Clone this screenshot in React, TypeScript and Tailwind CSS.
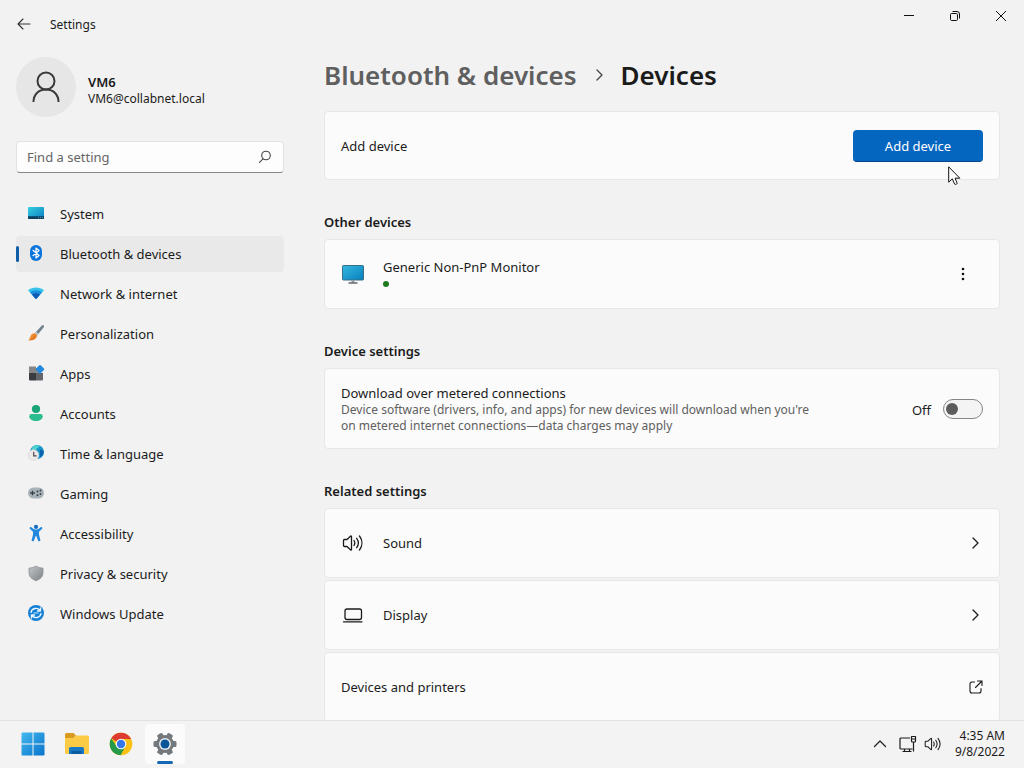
import React from 'react';

type IconProps = { className?: string };

const SystemIcon = () => (
  <svg viewBox="0 0 20 20" className="w-5 h-5">
    <defs>
      <linearGradient id="sys" x1="0" y1="0" x2="1" y2="1">
        <stop offset="0" stopColor="#35d0e0" />
        <stop offset="1" stopColor="#0a7cc0" />
      </linearGradient>
    </defs>
    <rect x="2" y="4" width="16" height="12" rx="1" fill="url(#sys)" />
    <path d="M2 13.3h16V15a1 1 0 0 1-1 1H3a1 1 0 0 1-1-1z" fill="#0b3d5e" />
    <path d="M12 14.7h1M14 14.7h1M16 14.7h1" stroke="#7fb6d6" strokeWidth=".8" />
  </svg>
);

const BluetoothIcon = () => (
  <svg viewBox="0 0 20 20" className="w-5 h-5">
    <rect x="4" y="2" width="12" height="16" rx="6" fill="#0b74dd" />
    <path d="M7 7.3l6 5.2-3 2.5V5l3 2.5-6 5.2" fill="none" stroke="#fff" strokeWidth="1.2" strokeLinejoin="round" strokeLinecap="round" />
  </svg>
);

const NetworkIcon = () => (
  <svg viewBox="0 0 20 20" className="w-5 h-5">
    <path d="M2 7.2C6.5 3.6 13.5 3.6 18 7.2L10.7 15.4a1 1 0 0 1-1.4 0z" fill="#38c4ea" />
    <path d="M3.9 9.3C7.5 6.5 12.5 6.5 16.1 9.3L10.7 15.4a1 1 0 0 1-1.4 0z" fill="#1c8fdc" />
    <path d="M6 11.6C8.500 9.800 11.500 9.800 14 11.6L10.700 15.400a1 1 0 0 1-1.400 0z" fill="#1159b5" />
  </svg>
);

const PersonalizationIcon = () => (
  <svg viewBox="0 0 20 20" className="w-5 h-5">
    <path d="M17.600 2.300c.6.500.5 1.400 0 2.100L11 12.600 8.600 10.400 15.800 2.600c.5-.6 1.200-.8 1.800-.3z" fill="#71828e" />
    <path d="M10.200 8.700l2.500 2.300-1.700 1.900-2.600-2.400z" fill="#bccbd3" />
    <path d="M8.500 10.200c1.500.2 2.700 1.400 2.500 2.900-.4 3.200-4.200 4.900-9 4.100 1.800-.8 1.800-2.300 2.500-4.200.6-1.700 2.200-3 4-2.800z" fill="#ef8d32" />
    <path d="M5 16.500c2.200-.5 3.500-2 4-4" stroke="#c95f1a" fill="none" />
  </svg>
);

const AppsIcon = () => (
  <svg viewBox="0 0 20 20" className="w-5 h-5">
    <path d="M3 3.500h7V10H3z" fill="#868686" />
    <path d="M3 10h7v7.500H4a1 1 0 0 1-1-1z" fill="#393c40" />
    <path d="M10 10h7v6.500a1 1 0 0 1-1 1h-6z" fill="#62666a" />
    <path d="M10 5h3v5h-3z" fill="#8c8f92" />
    <rect x="10.700" y="3" width="6.600" height="6.600" rx="1" transform="rotate(45 14 6.300)" fill="#2389df" />
  </svg>
);

const AccountsIcon = () => (
  <svg viewBox="0 0 20 20" className="w-5 h-5">
    <circle cx="10" cy="6" r="4.100" fill="#1aa579" />
    <path d="M5.500 11h9a2.200 2.200 0 0 1 2.200 2.200c0 3-3 4.800-6.700 4.800s-6.700-1.800-6.700-4.800A2.200 2.200 0 0 1 5.500 11z" fill="#2cbc90" />
  </svg>
);

const TimeIcon = () => (
  <svg viewBox="0 0 20 20" className="w-5 h-5">
    <circle cx="11" cy="9" r="7" fill="#1896c9" />
    <path d="M6.500 3.700c2-1.700 5-2 7-1-.5 2-2.500 2-3 3.500S7.500 8 5.500 7z" fill="#4fd1cc" />
    <path d="M13.500 7c2-.8 3 0 4.300 1.300-.1 2.400-1.300 4.600-3.200 6C13 12 14.500 9 13.500 7z" fill="#0b63ad" />
    <circle cx="7.500" cy="12" r="5.300" fill="#eceaea" stroke="#d9cfd3" strokeWidth=".6" />
    <path d="M7.700 8.800v4h3" fill="none" stroke="#55474f" strokeWidth="1.200" />
  </svg>
);

const GamingIcon = () => (
  <svg viewBox="0 0 20 20" className="w-5 h-5">
    <rect x="2" y="4.500" width="16" height="11" rx="5.500" fill="#a8b3b9" />
    <path d="M4.200 10h4.600M6.500 7.700v4.600" stroke="#35424a" strokeWidth="1.300" />
    <g fill="#35424a">
      <circle cx="11.500" cy="8.500" r="1" />
      <circle cx="14.500" cy="7.500" r="1" />
      <circle cx="14.500" cy="11" r="1" />
      <circle cx="11.500" cy="12.300" r="1" />
    </g>
  </svg>
);

const AccessibilityIcon = () => (
  <svg viewBox="0 0 20 20" className="w-5 h-5">
    <circle cx="10" cy="3.900" r="2.100" fill="#176fc0" />
    <path d="M4 4.300c.6-.6 1.300-.3 1.800.2C8.300 7.200 11.700 7.200 14.200 4.500c.5-.5 1.200-.8 1.800-.2.600.6.400 1.300-.1 1.800L13 8.700v3l1.300 5c.2.800-.1 1.400-.8 1.500-.7.200-1.300-.1-1.500-.8L10.300 13h-.6L8 17.400c-.2.700-.8 1-1.500.8-.7-.1-1-.7-.8-1.500l1.300-5v-3L4.100 6.100C3.600 5.600 3.400 4.900 4 4.300z" fill="#2189dd" />
  </svg>
);

const PrivacyIcon = () => (
  <svg viewBox="0 0 20 20" className="w-5 h-5">
    <defs>
      <linearGradient id="shield" x1="0" y1="0" x2="1" y2="1">
        <stop offset="0" stopColor="#c4c7c9" />
        <stop offset="1" stopColor="#7c8084" />
      </linearGradient>
    </defs>
    <path d="M10 3c2.300 1.400 4.300 2 7 2.100v4.500c0 4-2.500 6.500-7 8.200-4.500-1.700-7-4.200-7-8.200V5.100C5.700 5 7.700 4.400 10 3z" fill="url(#shield)" stroke="#8d9195" strokeWidth=".8" />
  </svg>
);

const UpdateIcon = () => (
  <svg viewBox="0 0 20 20" className="w-5 h-5">
    <circle cx="10" cy="10" r="8" fill="#1580d4" />
    <g fill="none" stroke="#e8f5ff" strokeWidth="1.400" strokeLinecap="round" strokeLinejoin="round">
      <path d="M5 9.300C5.800 5.200 11.500 4 14 7.500M14.500 5v3h-3" />
      <path d="M15 10.700C14.200 14.800 8.500 16 6 12.500M5.500 15v-3h3" />
    </g>
    <path d="M7.500 10h5" stroke="#9fd4fa" strokeWidth="1.200" />
  </svg>
);

const SpeakerIcon = ({ className }: IconProps) => (
  <svg viewBox="0 0 22 20" className={className} fill="none" stroke="currentColor" strokeWidth="1.300" strokeLinecap="round" strokeLinejoin="round">
    <path d="M2.500 7.500a1 1 0 0 1 1-1H6l3.700-3.400c.4-.3.800-.1.800.4v13c0 .5-.4.700-.8.400L6 13.500H3.500a1 1 0 0 1-1-1z" />
    <path d="M13 7.500c1 1.500 1 3.500 0 5M15.700 5.300c2 2.800 2 6.600 0 9.400M18.500 3c3.200 4.200 3.200 9.800 0 14" />
  </svg>
);

const LaptopIcon = () => (
  <svg viewBox="0 0 22 20" className="w-[22px] h-5" fill="none" stroke="currentColor" strokeWidth="1.300" strokeLinecap="round">
    <rect x="4" y="4" width="16.500" height="10.500" rx="2" />
    <path d="M2.500 16.800h18.500" />
  </svg>
);

const ChevronRight = ({ className }: IconProps) => (
  <svg viewBox="0 0 12 12" className={className} fill="none" stroke="currentColor" strokeWidth="1.300" strokeLinecap="round" strokeLinejoin="round">
    <path d="M4 1l5 5-5 5" />
  </svg>
);

const OpenIcon = () => (
  <svg viewBox="0 0 14 14" className="w-3.5 h-3.5" fill="none" stroke="currentColor" strokeWidth="1.100" strokeLinecap="round" strokeLinejoin="round">
    <path d="M5.500 2H3a2 2 0 0 0-2 2v7a2 2 0 0 0 2 2h7a2 2 0 0 0 2-2V8.500M8.500 1H13v4.500M13 1L6.500 7.500" />
  </svg>
);

const MonitorIcon = () => (
  <svg viewBox="0 0 24 20" className="w-6 h-5">
    <defs>
      <linearGradient id="mon" x1="0" y1="0" x2="1" y2="1">
        <stop offset="0" stopColor="#35b9df" />
        <stop offset="1" stopColor="#087fbd" />
      </linearGradient>
    </defs>
    <rect x="1.500" y="1.500" width="21" height="14.500" rx=".8" fill="url(#mon)" stroke="#3a6e87" />
    <path d="M10.500 16.500h3v2h-3z" fill="#8f979b" />
    <path d="M7.500 19h9" stroke="#41474b" strokeWidth="1.200" />
  </svg>
);

const Cursor = () => (
  <svg viewBox="0 0 13 20" className="w-[13px] h-5">
    <path d="M.7.8v15.400l3.600-3.400 2.300 5.300c.9.700 2.300.1 2.600-.8L7 12.200h4.800z" fill="#fff" stroke="#111" />
  </svg>
);

const WindowsLogo = () => (
  <svg viewBox="0 0 24 24" className="w-6 h-6">
    <defs>
      <linearGradient id="win" x1="0" y1="0" x2="1" y2="1">
        <stop offset="0" stopColor="#45b9ef" />
        <stop offset="1" stopColor="#0873cc" />
      </linearGradient>
    </defs>
    <path d="M1.500.5h10v11H.5v-10a1 1 0 0 1 1-1zM12.500.5h10a1 1 0 0 1 1 1v10h-11zM.5 12.500h11v11h-10a1 1 0 0 1-1-1zM12.500 12.500h11v10a1 1 0 0 1-1 1h-10z" fill="url(#win)" />
  </svg>
);

const ExplorerIcon = () => (
  <svg viewBox="0 0 24 24" className="w-6 h-6">
    <path d="M0 2.500a1.500 1.500 0 0 1 1.500-1.500h7L11 3.500 8.500 6H0z" fill="#d99a1e" />
    <path d="M0 6h8.500L11 3.500h11.500A1.500 1.500 0 0 1 24 5v15.500a1.500 1.500 0 0 1-1.500 1.500h-21A1.500 1.500 0 0 1 0 20.500z" fill="#fbcb45" />
    <path d="M4 22v-5.500A1.500 1.500 0 0 1 5.500 15h12a1.500 1.500 0 0 1 1.500 1.500V22z" fill="#1878c4" />
    <path d="M6.500 19h10v3h-10z" fill="#0c5b9f" />
  </svg>
);

const ChromeIcon = () => (
  <svg viewBox="0 0 24 24" className="w-6 h-6">
    <circle cx="12" cy="12" r="11.300" fill="#fbc116" />
    <path d="M12 12L2.200 6.350A11.300 11.300 0 0 1 21.800 6.350L22 6.900H12z" fill="#dd3b2f" />
    <path d="M2.200 6.350A11.300 11.300 0 0 0 11.500 23.300L16.400 14.600 12 12 7.600 14.600z" fill="#249a4a" />
    <circle cx="12" cy="12" r="5.300" fill="#fff" />
    <circle cx="12" cy="12" r="4.200" fill="#3578e5" />
  </svg>
);

const GearIcon = () => (
  <svg viewBox="0 0 24 24" className="w-6 h-6">
    <g fill="#74797e">
      <circle cx="12" cy="12" r="9" />
      <rect x="9" y=".5" width="6" height="23" rx="1.500" transform="rotate(30 12 12)" />
      <rect x="9" y=".5" width="6" height="23" rx="1.500" transform="rotate(90 12 12)" />
      <rect x="9" y=".5" width="6" height="23" rx="1.500" transform="rotate(150 12 12)" />
    </g>
    <circle cx="12" cy="12" r="6" fill="#e9edf0" />
    <circle cx="12" cy="12" r="4.500" fill="#0d5599" />
  </svg>
);

const NetworkTrayIcon = () => (
  <svg viewBox="0 0 18 18" className="w-[18px] h-[18px]" fill="none" stroke="currentColor" strokeWidth="1.200" strokeLinejoin="round">
    <path d="M11 3H2a1 1 0 0 0-1 1v9a1 1 0 0 0 1 1h11.500M5.500 14v2.500M10.500 14v2.500M3.500 16.500h9" />
    <path d="M12.500 1.500h4V6a1 1 0 0 1-1 1h-2a1 1 0 0 1-1-1zM12.500 4h4M14.500 7v9.500" />
  </svg>
);

const navItems = [
  { label: 'System', icon: <SystemIcon /> },
  { label: 'Bluetooth & devices', icon: <BluetoothIcon />, active: true },
  { label: 'Network & internet', icon: <NetworkIcon /> },
  { label: 'Personalization', icon: <PersonalizationIcon /> },
  { label: 'Apps', icon: <AppsIcon /> },
  { label: 'Accounts', icon: <AccountsIcon /> },
  { label: 'Time & language', icon: <TimeIcon /> },
  { label: 'Gaming', icon: <GamingIcon /> },
  { label: 'Accessibility', icon: <AccessibilityIcon /> },
  { label: 'Privacy & security', icon: <PrivacyIcon /> },
  { label: 'Windows Update', icon: <UpdateIcon /> },
];

const taskbarApps = [
  { label: 'Start', icon: <WindowsLogo /> },
  { label: 'File Explorer', icon: <ExplorerIcon /> },
  { label: 'Google Chrome', icon: <ChromeIcon /> },
  { label: 'Settings', icon: <GearIcon />, active: true },
];

const TitleBar = () => (
  <header className="flex justify-between h-12 shrink-0">
    <div className="flex items-center gap-[18px] pl-4">
      <button aria-label="Back" className="w-4 h-4">
        <svg viewBox="0 0 16 16" className="w-4 h-4" fill="none" stroke="#333" strokeWidth="1.100" strokeLinecap="round" strokeLinejoin="round">
          <path d="M14 8H2.500M7 3L2 8l5 5" />
        </svg>
      </button>
      <span className="pt-0.5 text-[12px] leading-4">Settings</span>
    </div>
    <div className="flex h-8">
      <button aria-label="Minimize" className="w-[46px] flex items-center justify-center">
        <svg viewBox="0 0 12 12" className="w-3 h-3" fill="none" stroke="#111">
          <path d="M1 5.500h10" />
        </svg>
      </button>
      <button aria-label="Restore" className="w-[46px] flex items-center justify-center">
        <svg viewBox="0 0 12 12" className="w-3 h-3" fill="none" stroke="#111">
          <rect x="1.500" y="3.500" width="7" height="7" rx="1.200" />
          <path d="M3.500 1.500H8A2.500 2.500 0 0 1 10.500 4v4.500" />
        </svg>
      </button>
      <button aria-label="Close" className="w-[46px] flex items-center justify-center">
        <svg viewBox="0 0 12 12" className="w-3 h-3" fill="none" stroke="#111">
          <path d="M1 1l10 10M11 1L1 11" />
        </svg>
      </button>
    </div>
  </header>
);

const Sidebar = () => (
  <aside className="w-[300px] shrink-0 px-4 pt-[9px]">
    <div className="flex items-center gap-3">
      <div className="w-15 h-15 rounded-full bg-[#e6e6e6] flex items-center justify-center">
        <svg viewBox="0 0 32 32" className="w-8 h-8" fill="none" stroke="#3a3a3a" strokeWidth="2">
          <circle cx="16" cy="10" r="8.500" />
          <path d="M3.500 31C3.500 23.500 8.500 18.500 16 18.500S28.500 23.500 28.500 31" />
        </svg>
      </div>
      <div className="pb-0.5 pt-2">
        <div className="text-[13px] leading-[18px] font-semibold">VM6</div>
        <div className="text-[12px] leading-4">VM6@collabnet.local</div>
      </div>
    </div>

    <label className="mt-6 flex items-center h-8 px-2.5 bg-[#fdfdfd] rounded border border-[#e2e2e2] border-b-[#868686]">
      <input
        type="text"
        aria-label="Find a setting"
        placeholder="Find a setting"
        className="flex-1 min-w-0 h-[22px] bg-transparent text-[13px] leading-[22px] outline-none placeholder:text-[#666]"
      />
      <svg viewBox="0 0 16 16" className="w-4 h-4" fill="none" stroke="#444" strokeWidth="1.100" strokeLinecap="round">
        <circle cx="9" cy="6.500" r="4.300" />
        <path d="M6 9.800L2.500 13.300" />
      </svg>
    </label>

    <nav className="mt-[23px] flex flex-col gap-1">
      {navItems.map((item) => (
        <a
          key={item.label}
          href="#"
          className={`relative flex items-center gap-3.5 h-9 pl-2.5 rounded ${item.active ? 'bg-[#e9e9e9]' : ''}`}
        >
          {item.active && <span className="absolute left-0 top-2.5 w-[3px] h-4 rounded-full bg-[#0f5ea8]" />}
          <span className="pb-0.5">{item.icon}</span>
          <span className="text-[13px] leading-5">{item.label}</span>
        </a>
      ))}
    </nav>
  </aside>
);

const cardClass = 'relative flex items-center bg-[#fbfbfb] border border-[#e7e7e7] rounded px-4';

const SectionTitle = ({ children }: { children: React.ReactNode }) => (
  <h2 className="mt-8 mb-[7px] text-[13px] leading-5 font-semibold">{children}</h2>
);

const Content = () => (
  <main className="flex-1 min-w-0 px-6 pt-[7px]">
    <h1 className="flex items-center text-[26px] leading-10 font-semibold">
      <a href="#" className="text-[#5f5f5f]">Bluetooth &amp; devices</a>
      <ChevronRight className="w-3 h-3 mx-4 text-[#444]" />
      <span>Devices</span>
    </h1>

    <section className={`${cardClass} mt-4 h-[69px] justify-between`}>
      <span className="text-[13px] leading-5">Add device</span>
      <button className="w-[130px] h-8 pt-px rounded bg-[#0566c0] border-b border-[#06458a] text-white text-[13px] leading-5">Add device</button>
      <div className="absolute right-[38px] top-[54px] pointer-events-none">
        <Cursor />
      </div>
    </section>

    <SectionTitle>Other devices</SectionTitle>
    <section className={`${cardClass} h-[70px]`}>
      <MonitorIcon />
      <div className="flex-1 ml-[18px]">
        <div className="text-[13px] leading-5">Generic Non-PnP Monitor</div>
        <div className="mt-1 mb-1 w-1.5 h-1.5 rounded-full bg-[#1f7a1f]" />
      </div>
      <button aria-label="More options" className="w-10 h-8 flex items-center justify-center">
        <svg viewBox="0 0 4 14" className="w-1 h-3.5" fill="#111">
          <circle cx="2" cy="2" r="1.300" />
          <circle cx="2" cy="7" r="1.300" />
          <circle cx="2" cy="12" r="1.300" />
        </svg>
      </button>
    </section>

    <SectionTitle>Device settings</SectionTitle>
    <section className={`${cardClass} h-[81px] justify-between`}>
      <div className="max-w-[476px]">
        <div className="text-[13px] leading-[18px]">Download over metered connections</div>
        <p id="metered-note" className="text-[12px] leading-4 text-[#606060]">
          Device software (drivers, info, and apps) for new devices will download when you're on metered internet
          connections—data charges may apply
        </p>
      </div>
      <label className="flex items-center gap-3 text-[13px] leading-5">
        <span className="pt-0.5">Off</span>
        <input
          type="checkbox"
          role="switch"
          aria-describedby="metered-note"
          className="appearance-none w-10 h-5 rounded-full border border-[#858585] bg-[#f4f4f4] flex items-center px-[2px] before:w-3 before:h-3 before:rounded-full before:bg-[#5c5c5c] checked:justify-end"
        />
      </label>
    </section>

    <SectionTitle>Related settings</SectionTitle>
    <div className="flex flex-col gap-0.5">
      <a href="#" className={`${cardClass} h-[70px]`}>
        <SpeakerIcon className="w-[22px] h-5" />
        <span className="flex-1 ml-5 text-[13px] leading-5">Sound</span>
        <ChevronRight className="w-3 h-3 mr-0.5" />
      </a>
      <a href="#" className={`${cardClass} h-[70px]`}>
        <LaptopIcon />
        <span className="flex-1 ml-5 text-[13px] leading-5">Display</span>
        <ChevronRight className="w-3 h-3 mr-0.5" />
      </a>
      <a href="#" className={`${cardClass} h-[70px] justify-between`}>
        <span className="text-[13px] leading-5">Devices and printers</span>
        <OpenIcon />
      </a>
    </div>
  </main>
);

const Taskbar = () => (
  <footer className="flex items-center justify-between h-12 shrink-0 pl-[13px] pr-[19px] bg-[#f3f3f3] border-t border-[#e3e3e3]">
    <div className="flex gap-1 pb-px">
      {taskbarApps.map((app) => (
        <button
          key={app.label}
          aria-label={app.label}
          className={`relative w-10 h-10 rounded flex items-center justify-center ${app.active ? 'bg-[#fbfbfb]' : ''}`}
        >
          {app.icon}
          {app.active && <span className="absolute bottom-0 w-4 h-[3px] rounded-full bg-[#1467b3]" />}
        </button>
      ))}
    </div>
    <div className="flex items-center pb-0.5">
      <button aria-label="Show hidden icons" className="mr-3">
        <svg viewBox="0 0 14 14" className="w-3.5 h-3.5" fill="none" stroke="#222" strokeWidth="1.300" strokeLinecap="round" strokeLinejoin="round">
          <path d="M1.500 9.500L7 4l5.500 5.500" />
        </svg>
      </button>
      <button aria-label="Network and volume" className="flex items-center gap-1.5 mr-3.5">
        <NetworkTrayIcon />
        <SpeakerIcon className="w-[18px] h-4" />
      </button>
      <div className="text-right text-[12px] leading-4">
        <div>4:35 AM</div>
        <div>9/8/2022</div>
      </div>
    </div>
  </footer>
);

export default function App() {
  return (
    <div className="h-screen flex flex-col overflow-hidden bg-[#f2f2f2] text-[#1b1b1b] font-['Noto_Sans',sans-serif]">
      <TitleBar />
      <div className="flex flex-1 min-h-0 overflow-hidden">
        <Sidebar />
        <Content />
      </div>
      <Taskbar />
    </div>
  );
}
